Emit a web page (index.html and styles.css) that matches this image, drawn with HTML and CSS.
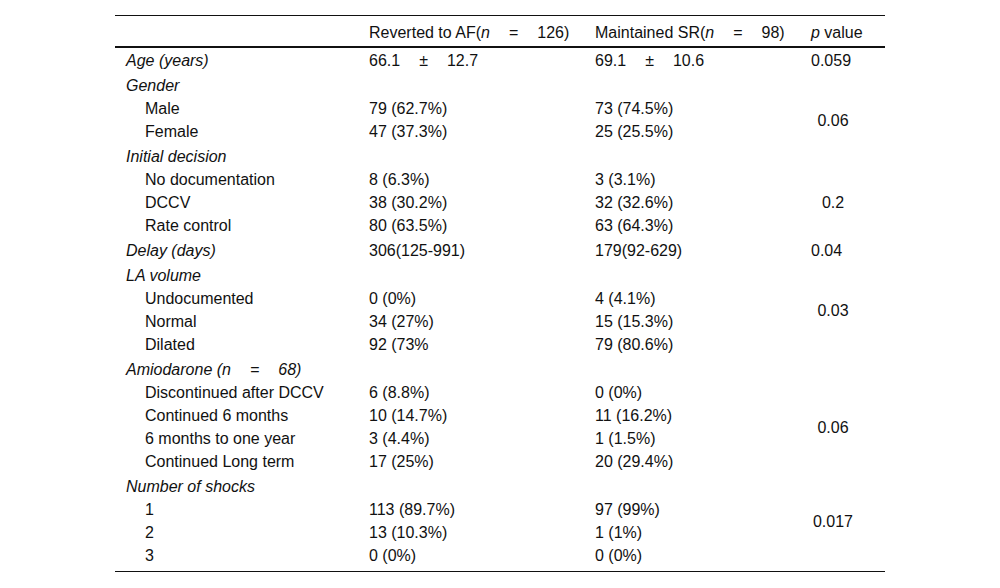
FILE: index.html
```html
<!DOCTYPE html>
<html lang="en">
<head>
<meta charset="utf-8">
<title>Table</title>
<link rel="stylesheet" href="styles.css">
</head>
<body>
<table class="tbl">
  <colgroup>
    <col class="c1"><col class="c2"><col class="c3"><col class="c4">
  </colgroup>
  <thead>
    <tr>
      <th></th>
      <th>Reverted to AF(<i>n</i><span class="op">=</span>126)</th>
      <th>Maintained SR(<i>n</i><span class="op">=</span>98)</th>
      <th><i>p</i> value</th>
    </tr>
  </thead>
  <tbody>
    <tr><td class="grp">Age (years)</td><td>66.1<span class="op">±</span>12.7</td><td>69.1<span class="op">±</span>10.6</td><td>0.059</td></tr>

    <tr class="gh"><td class="grp">Gender</td><td></td><td></td><td></td></tr>
    <tr><td class="sub">Male</td><td>79 (62.7%)</td><td>73 (74.5%)</td><td class="pc" rowspan="2">0.06</td></tr>
    <tr><td class="sub">Female</td><td>47 (37.3%)</td><td>25 (25.5%)</td></tr>

    <tr class="gh"><td class="grp">Initial decision</td><td></td><td></td><td></td></tr>
    <tr><td class="sub">No documentation</td><td>8 (6.3%)</td><td>3 (3.1%)</td><td class="pc" rowspan="3">0.2</td></tr>
    <tr><td class="sub">DCCV</td><td>38 (30.2%)</td><td>32 (32.6%)</td></tr>
    <tr><td class="sub">Rate control</td><td>80 (63.5%)</td><td>63 (64.3%)</td></tr>

    <tr class="gh"><td class="grp">Delay (days)</td><td>306(125-991)</td><td>179(92-629)</td><td>0.04</td></tr>

    <tr class="gh"><td class="grp">LA volume</td><td></td><td></td><td></td></tr>
    <tr><td class="sub">Undocumented</td><td>0 (0%)</td><td>4 (4.1%)</td><td class="pc" rowspan="2">0.03</td></tr>
    <tr><td class="sub">Normal</td><td>34 (27%)</td><td>15 (15.3%)</td></tr>
    <tr><td class="sub">Dilated</td><td>92 (73%</td><td>79 (80.6%)</td><td></td></tr>

    <tr class="gh"><td class="grp">Amiodarone (n<span class="op">=</span>68)</td><td></td><td></td><td></td></tr>
    <tr><td class="sub">Discontinued after DCCV</td><td>6 (8.8%)</td><td>0 (0%)</td><td class="pc" rowspan="4">0.06</td></tr>
    <tr><td class="sub">Continued 6 months</td><td>10 (14.7%)</td><td>11 (16.2%)</td></tr>
    <tr><td class="sub">6 months to one year</td><td>3 (4.4%)</td><td>1 (1.5%)</td></tr>
    <tr><td class="sub">Continued Long term</td><td>17 (25%)</td><td>20 (29.4%)</td></tr>

    <tr class="gh"><td class="grp">Number of shocks</td><td></td><td></td><td></td></tr>
    <tr><td class="sub">1</td><td>113 (89.7%)</td><td>97 (99%)</td><td class="pc" rowspan="2">0.017</td></tr>
    <tr><td class="sub">2</td><td>13 (10.3%)</td><td>1 (1%)</td></tr>
    <tr class="last"><td class="sub">3</td><td>0 (0%)</td><td>0 (0%)</td><td></td></tr>
  </tbody>
</table>
</body>
</html>
```

FILE: styles.css
```css
html, body {
  margin: 0;
  padding: 0;
  background: #ffffff;
}

body {
  padding: 15px 115px 0 115px;
  font-family: "Liberation Sans", Arial, sans-serif;
  font-size: 16px;
  color: #111111;
}

.tbl {
  width: 770px;
  table-layout: fixed;
  border-collapse: separate;
  border-spacing: 0;
  border-bottom: 1px solid #111111;
}

.c1 { width: 243px; }
.c2 { width: 226px; }
.c3 { width: 216px; }
.c4 { width: 85px; }

.tbl th,
.tbl td {
  padding: 3px 11px 1px 11px;
  line-height: 19px;
  text-align: left;
  vertical-align: middle;
  white-space: nowrap;
}

.tbl th {
  font-weight: normal;
  padding-top: 7px;
  padding-bottom: 4px;
  border-top: 1px solid #111111;
  border-bottom: 2px solid #111111;
}

.tbl tr.gh td {
  padding-top: 5px;
}

.tbl tr.last td {
  padding-bottom: 6px;
}

.grp {
  font-style: italic;
}

.tbl td.sub {
  padding-left: 30px;
}

.tbl td.pc {
  text-align: center;
  padding-right: 30px;
}

.op {
  display: inline-block;
  margin: 0 19px;
}
```
